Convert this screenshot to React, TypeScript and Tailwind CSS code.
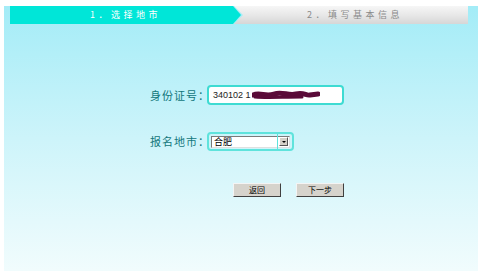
import React from "react";

const cjk = { fontFamily: '"Noto Sans CJK SC", "Noto Sans", sans-serif' };

function Redaction() {
  return (
    <svg width="68" height="10" viewBox="0 0 68 10" className="ml-[1px]">
      <path
        d="M1 5 C8 2, 14 7, 22 4 S 36 6, 44 4 S 54 6, 58 5 L 66 4"
        stroke="#5a0a38"
        strokeWidth="5"
        fill="none"
        strokeLinecap="round"
      />
      <path d="M3 7 C 15 8, 30 7, 50 7" stroke="#5a0a38" strokeWidth="3" fill="none" strokeLinecap="round" />
    </svg>
  );
}

export default function App() {
  return (
    <div className="w-[482px] h-[271px] bg-white pt-[6px] pl-[4px] overflow-hidden" style={cjk}>
      <div className="w-[474px] h-[265px] bg-gradient-to-b from-[#a3ecf7] via-[#cdf4fa] to-[#f1fcfd] flex flex-col">
        {/* step bar */}
        <div className="flex h-[18px] ml-[6px] w-[458px]">
          <div className="w-[231px] h-full bg-[#00e6d8] flex items-center justify-center text-white text-[9px] tracking-[3.5px] [clip-path:polygon(0_0,223px_0,231px_50%,223px_100%,0_100%)]">
            1．选择地市
          </div>
          <div className="flex-1 -ml-[7px] h-full bg-gradient-to-b from-[#f6f6f6] via-[#e8e8e8] to-[#d6d6d6] flex items-center justify-center text-[#8a8a8a] text-[9px] tracking-[3.5px] pl-[8px] [clip-path:polygon(0_0,100%_0,100%_100%,0_100%,9px_50%)]">
            2．填写基本信息
          </div>
        </div>

        {/* id row */}
        <div className="flex items-center mt-[61px] ml-[146px]">
          <span className="w-[57px] shrink-0 whitespace-nowrap text-[11px] tracking-[1px] text-[#12777b] leading-none">身份证号：</span>
          <div className="w-[137px] h-[20px] bg-white border-2 border-[#3edbd2] rounded-[4px] flex items-center pl-[4px]">
            <span className="text-[9px] text-[#222] leading-none" style={{ fontFamily: '"Liberation Sans", sans-serif' }}>
              340102 1
            </span>
            <Redaction />
          </div>
        </div>

        {/* city row */}
        <div className="flex items-center mt-[27px] ml-[146px]">
          <span className="w-[57px] shrink-0 whitespace-nowrap text-[11px] tracking-[1px] text-[#12777b] leading-none">报名地市：</span>
          <div className="relative w-[87px] h-[19px] border-2 border-[#5fe3dc] rounded-[4px] flex items-center pl-[2px]">
            <div className="w-[79px] h-[12px] bg-white border-t border-l border-[#7a7a7a] border-b border-r border-b-[#e0e0e0] border-r-[#e0e0e0] flex items-center">
              <span className="flex-1 text-[9px] leading-none text-black pl-[2px]">合肥</span>
              <div className="w-[9px] h-[9px] mr-[1px] bg-[#d4d0c8] border border-t-white border-l-white border-b-[#555] border-r-[#555] flex items-center justify-center">
                <div className="w-0 h-0 border-l-[2px] border-r-[2px] border-t-[2px] border-l-transparent border-r-transparent border-t-black" />
              </div>
            </div>
            <div className="absolute left-[68px] top-[-2px] w-[1px] h-[19px] bg-[#5fe3dc]" />
          </div>
        </div>

        {/* buttons */}
        <div className="flex mt-[32px] ml-[229px] gap-[15px]">
          <button className="w-[48px] h-[14px] bg-[#d6d3cc] border border-t-[#f4f4f4] border-l-[#f4f4f4] border-b-[#404040] border-r-[#404040] text-[8px] leading-none text-black flex items-center justify-center">
            返回
          </button>
          <button className="w-[48px] h-[14px] bg-[#d6d3cc] border border-t-[#f4f4f4] border-l-[#f4f4f4] border-b-[#404040] border-r-[#404040] text-[8px] leading-none text-black flex items-center justify-center">
            下一步
          </button>
        </div>
      </div>
    </div>
  );
}
